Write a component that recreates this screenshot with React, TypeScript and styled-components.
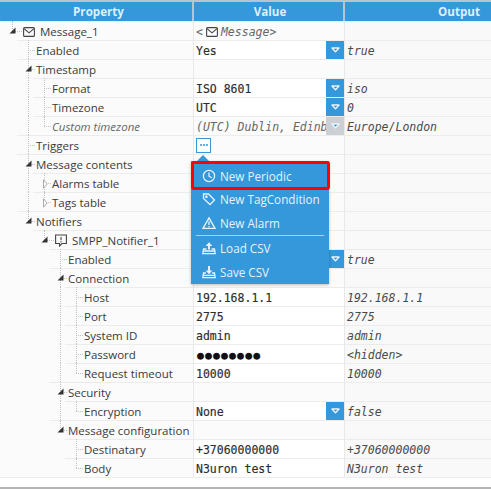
import type { ReactNode } from "react";
import { createGlobalStyle, styled } from "styled-components";

const GlobalStyle = createGlobalStyle`
  html, body {
    margin: 0;
    padding: 0;
    background: #fff;
  }
  #root {
    width: 491px;
    height: 489px;
    overflow: hidden;
  }
`;

const COL_1 = 194;
const COL_2 = 151;
const INDENT = 16;
const ROW_H = 19;
const MONO = `"DejaVu Sans Mono", monospace`;

const guideX = (depth: number) => 12 + depth * INDENT;

const Page = styled.div`
  width: 491px;
  height: 489px;
  box-sizing: border-box;
  position: relative;
  border-top: 2px solid #b9c4cc;
  border-bottom: 2px solid #b4b4b4;
  font-family: "Open Sans", sans-serif;
  font-size: 11.5px;
  color: #3a3a3a;
  background: #fff;
  overflow: hidden;
`;

const HeaderRow = styled.div`
  display: grid;
  grid-template-columns: ${COL_1}px ${COL_2}px 1fr;
  height: ${ROW_H}px;
  background: #3498db;
`;

const HeaderCell = styled.div<{ $shift: number }>`
  display: flex;
  align-items: center;
  justify-content: center;
  box-sizing: border-box;
  padding-left: ${(p) => p.$shift}px;
  border-right: 2px solid #b4c6d2;
  color: #dcf0fb;
  font-weight: 700;
  font-size: 11.6px;
  &:last-child {
    border-right: 0;
  }
`;

const Rows = styled.div`
  border-bottom: 1px solid #ececec;
`;

const Row = styled.div`
  display: grid;
  grid-template-columns: ${COL_1}px ${COL_2}px 1fr;
  height: ${ROW_H}px;
`;

const NameCell = styled.div`
  position: relative;
  box-sizing: border-box;
  background: #fbfbfb;
  border-right: 1px solid #e8e8e8;
`;

const NameBody = styled.div<{ $depth: number; $icon: boolean }>`
  display: flex;
  align-items: center;
  height: ${ROW_H}px;
  box-sizing: border-box;
  margin-left: ${(p) => 1 + p.$depth * INDENT}px;
  padding-left: ${(p) => (p.$icon ? 22 : 19)}px;
  padding-top: 1px;
  border-top: 1px solid #ececec;
  white-space: nowrap;
`;

const Label = styled.span<{ $muted?: boolean }>`
  position: relative;
  color: ${(p) => (p.$muted ? "#666" : "#3a3a3a")};
  font-style: ${(p) => (p.$muted ? "italic" : "normal")};
`;

const NodeIcon = styled.span`
  display: flex;
  margin-right: 5px;
`;

const VGuide = styled.span<{ $depth: number; $half?: boolean }>`
  position: absolute;
  left: ${(p) => guideX(p.$depth)}px;
  top: 0;
  height: ${(p) => (p.$half ? 10 : ROW_H)}px;
  border-left: 1px dotted #c2c2c2;
`;

const HGuide = styled.span<{ $depth: number; $icon: boolean }>`
  position: absolute;
  left: ${(p) => guideX(p.$depth)}px;
  top: 10px;
  width: ${(p) => (p.$icon ? 10 : 7)}px;
  border-top: 1px dotted #c2c2c2;
`;

const ExpanderBox = styled.span<{ $depth: number }>`
  position: absolute;
  left: ${(p) => 9 + p.$depth * INDENT}px;
  top: 6px;
  display: flex;
`;

const ValueCell = styled.div<{ $input?: boolean }>`
  position: relative;
  display: flex;
  align-items: center;
  padding: 1px 0 0 2px;
  overflow: hidden;
  white-space: nowrap;
  box-sizing: border-box;
  background: ${(p) => (p.$input ? "#fff" : "#fbfbfb")};
  border-top: 1px solid #ececec;
  border-right: 1px solid #e8e8e8;
  font-family: ${MONO};
  font-size: 11.5px;
  color: #2c2c2c;
  -webkit-text-stroke: 0.15px #2c2c2c;
`;

const MutedValue = styled.span`
  font-style: italic;
  color: #666;
  -webkit-text-stroke: 0;
  display: inline-flex;
  align-items: center;
  gap: 3px;
`;

const PasswordDots = styled.span`
  font-size: 11.5px;
  letter-spacing: 1.1px;
  color: #111;
  margin-left: 1px;
  -webkit-text-stroke: 0;
`;

const OutputCell = styled.div`
  display: flex;
  align-items: center;
  padding: 1px 0 0 2px;
  box-sizing: border-box;
  background: #f9f9f9;
  border-top: 1px solid #ececec;
  font-family: ${MONO};
  font-size: 11.5px;
  font-style: italic;
  color: #4a4a4a;
  white-space: nowrap;
`;

const DropButton = styled.span<{ $disabled?: boolean }>`
  position: absolute;
  right: 0;
  top: 0;
  width: 18px;
  height: 18px;
  display: flex;
  align-items: center;
  justify-content: center;
  background: ${(p) => (p.$disabled ? "#ccd0d4" : "#3498db")};
`;

const EllipsisButton = styled.span`
  width: 15px;
  height: 15px;
  box-sizing: border-box;
  border: 1px solid #3498db;
  display: flex;
  align-items: center;
  justify-content: center;
  gap: 1px;
  background: #fff;
  margin: -1px 0 0 0;
  i {
    width: 2px;
    height: 2px;
    border-radius: 50%;
    background: #3498db;
  }
`;

const Menu = styled.div`
  position: absolute;
  left: 191px;
  top: 159px;
  width: 138px;
  background: #3498db;
  color: #e6f3fb;
  box-shadow: 0 1px 3px rgba(0, 0, 0, 0.25);
  font-size: 11.7px;
  &::before {
    content: "";
    position: absolute;
    left: 6px;
    top: -6px;
    border-left: 6px solid transparent;
    border-right: 6px solid transparent;
    border-bottom: 6px solid #3498db;
  }
`;

const MenuItem = styled.div`
  display: flex;
  align-items: center;
  gap: 4px;
  height: 24px;
  box-sizing: border-box;
  padding-left: 11px;
  white-space: nowrap;
`;

const ActiveItem = styled(MenuItem)`
  position: relative;
  z-index: 1;
  height: 29px;
  width: 139px;
  margin-bottom: -3px;
  padding-left: 8px;
  border: 3px solid #f00;
  border-radius: 3px;
  background: #3498db;
`;

const MenuRule = styled.div`
  height: 1px;
  margin: 0 5px;
  background: #a9d3ef;
`;

const MenuIcon = ({ kind }: { kind: string }) => (
  <svg width="14" height="14" viewBox="0 0 14 14" fill="none" stroke="#e6f3fb" strokeWidth="1.3">
    {kind === "clock" && (
      <>
        <circle cx="7" cy="7" r="5.6" />
        <path d="M7 3.4V7.2L9.8 8.8" />
      </>
    )}
    {kind === "tag" && (
      <>
        <path d="M1.5 2H6.5L12.5 8L8 12.5L1.5 6.5Z" />
        <circle cx="4.4" cy="4.8" r="0.7" />
      </>
    )}
    {kind === "alarm" && (
      <>
        <path d="M7 1.8L13 12.4H1Z" strokeWidth="1.4" />
        <path d="M7 5.2V9M7 10V11.2" />
      </>
    )}
    {kind === "load" && (
      <>
        <path d="M7 8.5V2.5" strokeWidth="2" />
        <path d="M3.6 5L7 1.2L10.4 5Z" fill="#e6f3fb" stroke="none" />
        <path d="M4.5 8H1.5L0.8 12.6H13.2L12.5 8H9.5M1.2 10H12.8" />
      </>
    )}
    {kind === "save" && (
      <>
        <path d="M7 1V6.5" strokeWidth="2" />
        <path d="M3.6 5.5L7 9.2L10.4 5.5Z" fill="#e6f3fb" stroke="none" />
        <path d="M4 8H1.5L0.8 12.6H13.2L12.5 8H10M1.2 10.4H12.8" />
      </>
    )}
  </svg>
);

const MailIcon = () => (
  <svg width="12" height="10" viewBox="0 0 12 10" fill="none" stroke="#444" strokeWidth="1.1">
    <rect x="0.6" y="0.6" width="10.8" height="8.8" rx="1" />
    <path d="M1 1.6L6 5.8L11 1.6" />
  </svg>
);

const NotifierIcon = () => (
  <svg width="12" height="13" viewBox="0 0 12 13" fill="none" stroke="#444" strokeWidth="1.1">
    <path d="M0.6 1H11.4V9.5H7L4.5 12V9.5H0.6Z" />
    <path d="M6 3V6.2M6 7.2V8.4" />
  </svg>
);

const DropGlyph = () => (
  <svg width="9" height="6" viewBox="0 0 9 6" fill="#2f86c4" stroke="#eaf5fc" strokeWidth="1.4" strokeLinejoin="round">
    <path d="M1 1H8L4.5 4.8Z" />
  </svg>
);

const Expander = ({ open }: { open: boolean }) =>
  open ? (
    <svg width="7" height="7" viewBox="0 0 7 7">
      <path d="M6.5 0.5V6.5H0.5Z" fill="#333" />
    </svg>
  ) : (
    <svg width="7" height="10" viewBox="0 0 7 10">
      <path d="M2.5 0.8L6.2 5L2.5 9.2Z" fill="#fff" stroke="#aaa" />
    </svg>
  );

type RowData = {
  depth: number;
  name: string;
  open?: boolean;
  icon?: "mail" | "notifier";
  muted?: boolean;
  value?: ReactNode;
  input?: boolean;
  drop?: "on" | "off";
  output?: string;
};

const rows: RowData[] = [
  {
    depth: 0,
    name: "Message_1",
    open: true,
    icon: "mail",
    value: (
      <MutedValue>
        &lt;
        <MailIcon />
        <span>Message&gt;</span>
      </MutedValue>
    ),
  },
  { depth: 1, name: "Enabled", value: "Yes", input: true, drop: "on", output: "true" },
  { depth: 1, name: "Timestamp", open: true },
  { depth: 2, name: "Format", value: "ISO 8601", input: true, drop: "on", output: "iso" },
  { depth: 2, name: "Timezone", value: "UTC", input: true, drop: "on", output: "0" },
  {
    depth: 2,
    name: "Custom timezone",
    muted: true,
    value: <MutedValue>(UTC) Dublin, Edinburgh</MutedValue>,
    drop: "off",
    output: "Europe/London",
  },
  {
    depth: 1,
    name: "Triggers",
    value: (
      <EllipsisButton>
        <i />
        <i />
        <i />
      </EllipsisButton>
    ),
  },
  { depth: 1, name: "Message contents", open: true },
  { depth: 2, name: "Alarms table", open: false },
  { depth: 2, name: "Tags table", open: false },
  { depth: 1, name: "Notifiers", open: true },
  { depth: 2, name: "SMPP_Notifier_1", open: true, icon: "notifier" },
  { depth: 3, name: "Enabled", value: "Yes", input: true, drop: "on", output: "true" },
  { depth: 3, name: "Connection", open: true },
  { depth: 4, name: "Host", value: "192.168.1.1", input: true, output: "192.168.1.1" },
  { depth: 4, name: "Port", value: "2775", input: true, output: "2775" },
  { depth: 4, name: "System ID", value: "admin", input: true, output: "admin" },
  { depth: 4, name: "Password", value: <PasswordDots>●●●●●●●●</PasswordDots>, input: true, output: "<hidden>" },
  { depth: 4, name: "Request timeout", value: "10000", input: true, output: "10000" },
  { depth: 3, name: "Security", open: true },
  { depth: 4, name: "Encryption", value: "None", input: true, drop: "on", output: "false" },
  { depth: 3, name: "Message configuration", open: true },
  { depth: 4, name: "Destinatary", value: "+37060000000", input: true, output: "+37060000000" },
  { depth: 4, name: "Body", value: "N3uron test", input: true, output: "N3uron test" },
];

// true when another row at this depth follows before the branch closes
const hasNext = (index: number, depth: number) => {
  for (let i = index + 1; i < rows.length; i++) {
    if (rows[i].depth < depth) return false;
    if (rows[i].depth === depth) return true;
  }
  return false;
};

const Guides = ({ index, row }: { index: number; row: RowData }) => {
  const levels = Array.from({ length: row.depth }, (_, a) => a).filter((a) => hasNext(index, a));
  return (
    <>
      {levels.map((a) => (
        <VGuide key={a} $depth={a} />
      ))}
      <VGuide $depth={row.depth} $half={!hasNext(index, row.depth)} />
      <HGuide $depth={row.depth} $icon={!!row.icon} />
    </>
  );
};

export default function App() {
  return (
    <>
      <GlobalStyle />
      <Page>
        <HeaderRow>
          <HeaderCell $shift={5}>Property</HeaderCell>
          <HeaderCell $shift={3}>Value</HeaderCell>
          <HeaderCell $shift={82}>Output</HeaderCell>
        </HeaderRow>
        <Rows>
          {rows.map((r, i) => (
            <Row key={i}>
              <NameCell>
                <Guides index={i} row={r} />
                {r.open !== undefined && (
                  <ExpanderBox $depth={r.depth}>
                    <Expander open={r.open} />
                  </ExpanderBox>
                )}
                <NameBody $depth={r.depth} $icon={!!r.icon}>
                  {r.icon && <NodeIcon>{r.icon === "mail" ? <MailIcon /> : <NotifierIcon />}</NodeIcon>}
                  <Label $muted={r.muted}>{r.name}</Label>
                </NameBody>
              </NameCell>
              <ValueCell $input={r.input}>
                {r.value}
                {r.drop && (
                  <DropButton $disabled={r.drop === "off"}>
                    <DropGlyph />
                  </DropButton>
                )}
              </ValueCell>
              <OutputCell>{r.output}</OutputCell>
            </Row>
          ))}
        </Rows>
        <Menu>
          <ActiveItem>
            <MenuIcon kind="clock" />
            New Periodic
          </ActiveItem>
          <MenuItem>
            <MenuIcon kind="tag" />
            New TagCondition
          </MenuItem>
          <MenuItem>
            <MenuIcon kind="alarm" />
            New Alarm
          </MenuItem>
          <MenuRule />
          <MenuItem>
            <MenuIcon kind="load" />
            Load CSV
          </MenuItem>
          <MenuItem>
            <MenuIcon kind="save" />
            Save CSV
          </MenuItem>
        </Menu>
      </Page>
    </>
  );
}
